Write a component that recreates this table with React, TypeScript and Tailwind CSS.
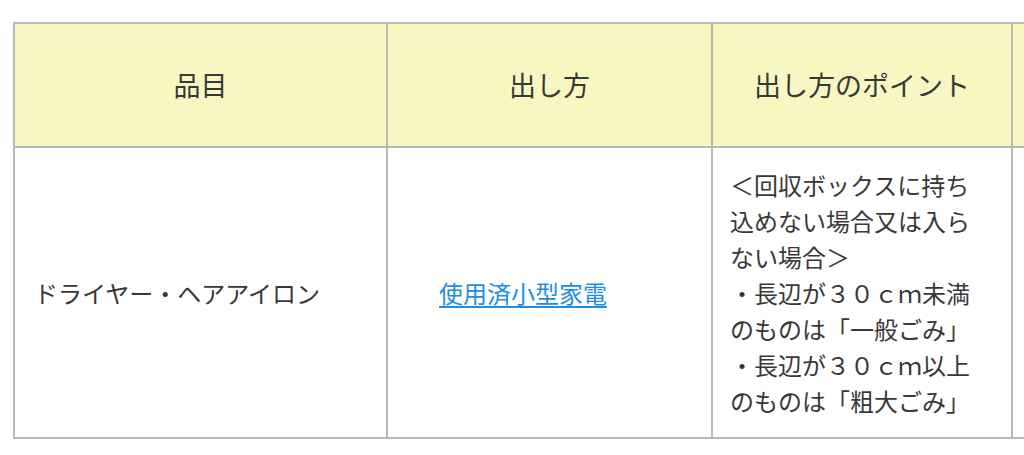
import React from 'react';

const rows = [
    {
        item: 'ドライヤー・ヘアアイロン',
        method: '使用済小型家電',
        points: [
            '＜回収ボックスに持ち込めない場合又は入らない場合＞',
            '・長辺が３０ｃｍ未満のものは「一般ごみ」',
            '・長辺が３０ｃｍ以上のものは「粗大ごみ」',
        ],
    },
];

export default function App() {
    return (
        <div
            className="h-[455px] w-[1024px] overflow-hidden bg-white pl-[13px] pt-[22px] text-[#383838]"
            style={{ fontFamily: '"Noto Sans CJK JP", "Noto Sans", sans-serif' }}
        >
            <table className="w-[1300px] table-fixed border-collapse">
                <colgroup>
                    <col className="w-[373px]" />
                    <col className="w-[325px]" />
                    <col className="w-[300px]" />
                    <col className="w-[302px]" />
                </colgroup>
                <thead>
                    <tr className="h-[124px] bg-[#f8f7c1] text-[27px]">
                        <th className="border-2 border-[#b8b8b8] font-normal">品目</th>
                        <th className="border-2 border-[#b8b8b8] font-normal">出し方</th>
                        <th className="border-2 border-[#b8b8b8] font-normal">出し方のポイント</th>
                        <th className="border-2 border-[#b8b8b8] font-normal" />
                    </tr>
                </thead>
                <tbody>
                    {rows.map((row) => (
                        <tr key={row.item} className="h-[291px] text-[24px] leading-[36px]">
                            <td className="border-2 border-[#b8b8b8] pl-[19px] pr-[20px] align-middle">
                                {row.item}
                            </td>
                            <td className="border-2 border-[#b8b8b8] pl-[51px] align-middle">
                                <a href="#" className="text-[#1f8ee0] underline underline-offset-[3px]">
                                    {row.method}
                                </a>
                            </td>
                            <td className="border-2 border-[#b8b8b8] pl-[17px] pr-[19px] py-[18px] align-middle">
                                {row.points.map((p) => (
                                    <div key={p}>{p}</div>
                                ))}
                            </td>
                            <td className="border-2 border-[#b8b8b8] px-[20px]" />
                        </tr>
                    ))}
                </tbody>
            </table>
        </div>
    );
}
